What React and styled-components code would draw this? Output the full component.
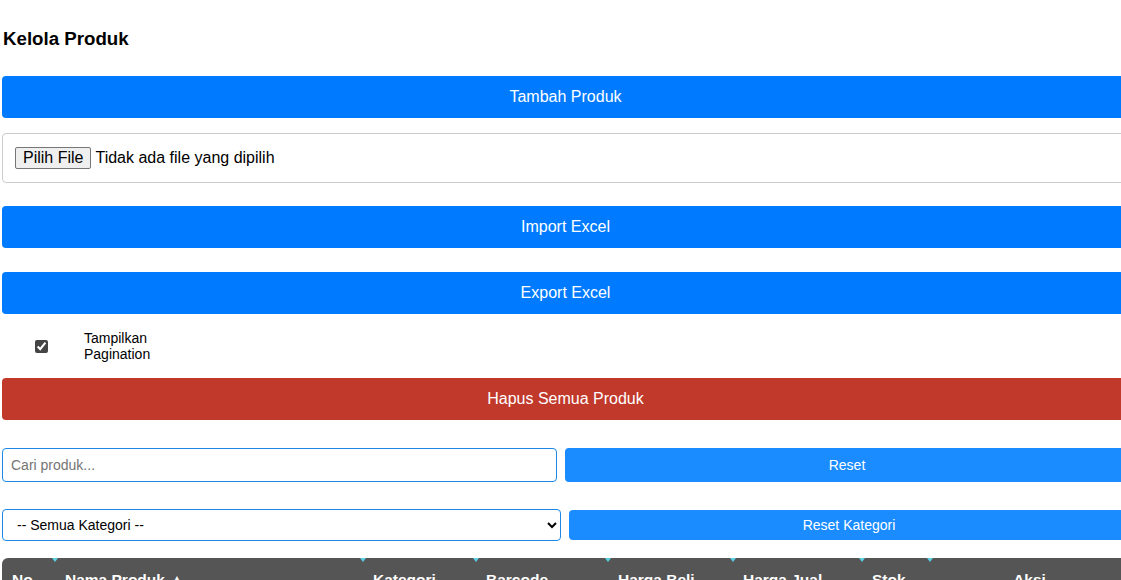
import React from 'react';
import styled, { createGlobalStyle } from 'styled-components';

const GlobalStyle = createGlobalStyle`
  html, body {
    margin: 0;
    padding: 0;
    background: #fff;
    overflow: hidden;
    font-family: "Liberation Sans", Arial, sans-serif;
  }
`;

const Page = styled.div`
  width: 1127px;
  margin-left: 2px;
  padding-top: 28px;
`;

const Title = styled.h2`
  margin: 0 0 26px 1px;
  font-size: 18.7px;
  line-height: 22px;
  font-weight: bold;
  color: #000;
`;

const BlockButton = styled.button`
  display: block;
  width: 100%;
  height: 42px;
  margin: 0 0 ${(p) => p.$mb || 0}px;
  border: none;
  border-radius: 4px;
  background: ${(p) => (p.$danger ? '#c0392b' : '#007bff')};
  color: #fff;
  font-family: inherit;
  font-size: 16px;
  cursor: pointer;
`;

const FileBox = styled.div`
  display: flex;
  align-items: center;
  gap: 4px;
  height: 50px;
  box-sizing: border-box;
  padding: 0 12px;
  margin-bottom: 23px;
  border: 1px solid #ccc;
  border-radius: 4px;
  font-size: 16px;
  color: #000;
`;

const FileButton = styled.button`
  height: 22px;
  padding: 0 7px;
  border: 1px solid #767676;
  border-radius: 2px;
  background: #efefef;
  font-family: inherit;
  font-size: 16px;
  color: #000;
`;

const CheckRow = styled.label`
  display: flex;
  align-items: center;
  height: 32px;
  margin: 16px 0;
  font-size: 14px;
  line-height: 16px;
  color: #000;
`;

const CheckCell = styled.span`
  display: flex;
  justify-content: center;
  width: 78px;
`;

const Check = styled.input`
  width: 13px;
  height: 13px;
  margin: 0;
  accent-color: #444;
`;

const CheckLabel = styled.span`
  width: 80px;
  margin-left: 4px;
`;

const FilterRow = styled.div`
  display: flex;
  gap: 8px;
  margin-bottom: ${(p) => p.$mb || 0}px;
`;

const SearchInput = styled.input`
  width: 555px;
  height: 34px;
  box-sizing: border-box;
  padding: 0 8px;
  border: 1px solid #1e88e5;
  border-radius: 4px;
  font-family: inherit;
  font-size: 14px;
  &::placeholder {
    color: #757575;
  }
`;

const Select = styled.select`
  width: 559px;
  height: 32px;
  box-sizing: border-box;
  padding: 0 10px;
  border: 1px solid #1e88e5;
  border-radius: 4px;
  background: #fff;
  font-family: inherit;
  font-size: 14px;
  color: #000;
`;

const SmallButton = styled.button`
  flex: 1;
  height: ${(p) => p.$h}px;
  margin-top: ${(p) => p.$mt || 0}px;
  border: none;
  border-radius: 4px;
  background: #1a8cff;
  color: #fff;
  font-family: inherit;
  font-size: 14px;
`;

const Table = styled.table`
  width: 1127px;
  table-layout: fixed;
  border-collapse: separate;
  border-spacing: 0;
  font-size: 15.5px;
`;

const Th = styled.th`
  position: relative;
  box-sizing: border-box;
  width: ${(p) => p.$w}px;
  padding: 13px 10px;
  background: #555;
  color: #fff;
  font-weight: bold;
  text-align: ${(p) => (p.$center ? 'center' : 'left')};
  white-space: nowrap;
  &:first-child {
    border-top-left-radius: 6px;
  }
  &:not(:first-child)::before {
    content: '';
    position: absolute;
    top: 0;
    left: -3px;
    border-left: 3px solid transparent;
    border-right: 3px solid transparent;
    border-top: 4px solid #5ad0e3;
  }
`;

const columns = [
  { label: 'No', w: 53 },
  { label: 'Nama Produk ▲', w: 308 },
  { label: 'Kategori', w: 113 },
  { label: 'Barcode', w: 132 },
  { label: 'Harga Beli', w: 125 },
  { label: 'Harga Jual', w: 129 },
  { label: 'Stok', w: 68 },
  { label: 'Aksi', w: 199, center: true },
];

export default function App() {
  return (
    <>
      <GlobalStyle />
      <Page>
        <Title>Kelola Produk</Title>
        <BlockButton $mb={15}>Tambah Produk</BlockButton>
        <FileBox>
          <FileButton>Pilih File</FileButton>
          <span>Tidak ada file yang dipilih</span>
        </FileBox>
        <BlockButton $mb={24}>Import Excel</BlockButton>
        <BlockButton>Export Excel</BlockButton>
        <CheckRow>
          <CheckCell>
            <Check type="checkbox" defaultChecked />
          </CheckCell>
          <CheckLabel>Tampilkan Pagination</CheckLabel>
        </CheckRow>
        <BlockButton $danger $mb={28}>Hapus Semua Produk</BlockButton>
        <FilterRow $mb={27}>
          <SearchInput placeholder="Cari produk..." />
          <SmallButton $h={34}>Reset</SmallButton>
        </FilterRow>
        <FilterRow $mb={17}>
          <Select defaultValue="">
            <option value="">-- Semua Kategori --</option>
          </Select>
          <SmallButton $h={30} $mt={1}>Reset Kategori</SmallButton>
        </FilterRow>
        <Table>
          <thead>
            <tr>
              {columns.map((c) => (
                <Th key={c.label} $w={c.w} $center={c.center}>
                  {c.label}
                </Th>
              ))}
            </tr>
          </thead>
        </Table>
      </Page>
    </>
  );
}
